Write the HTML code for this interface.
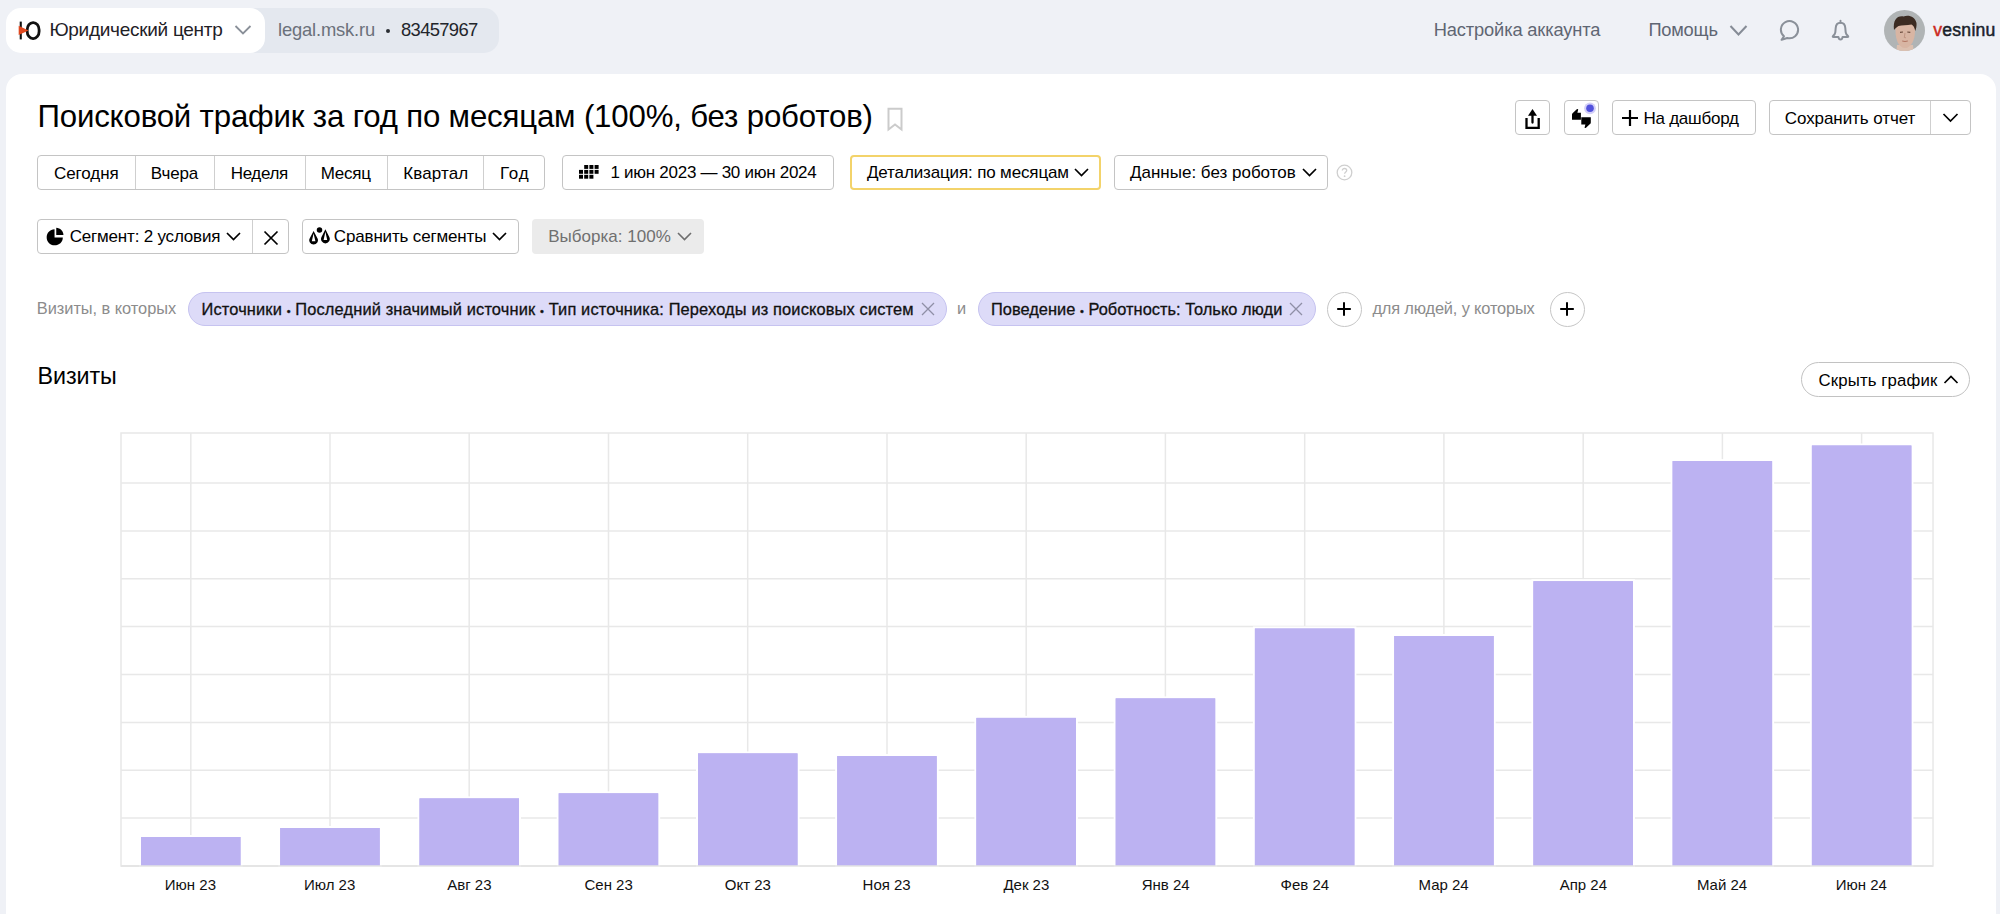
<!DOCTYPE html>
<html><head><meta charset="utf-8">
<style>
*{box-sizing:border-box;margin:0;padding:0}
html,body{width:2000px;height:914px;overflow:hidden;background:#eff1f6;font-family:"Liberation Sans",sans-serif;color:#000}
.a{position:absolute;white-space:nowrap}
.b{position:absolute;border:1px solid #c4c4c4;border-radius:4px;background:#fff}
.dv{position:absolute;width:1px;background:#cfcfcf}
</style></head><body>
<!-- header -->
<div class="a" style="left:240px;top:8px;width:259px;height:45px;background:#e4e8ef;border-radius:0 15px 15px 0"></div>
<div class="a" style="left:6px;top:8px;width:259px;height:45px;background:#fff;border-radius:15px"></div>
<svg class="a" style="left:17px;top:19px" width="26" height="24" viewBox="0 0 26 24">
 <rect x="2.7" y="2.6" width="2.1" height="17.8" fill="#111"/>
 <rect x="10.2" y="3.6" width="11.9" height="16" rx="5.8" ry="7.2" fill="none" stroke="#111" stroke-width="2.8"/>
 <path d="M1.7 6.8 L11.5 11.5 L1.7 16 Z" fill="#e0481f"/>
</svg>
<svg class="a" style="left:234px;top:24px" width="18" height="12" viewBox="0 0 18 12"><path d="M1.5 2 L9 9.5 L16.5 2" fill="none" stroke="#8a9099" stroke-width="1.8"/></svg>
<div class="a" style="left:386px;top:28.5px;width:4px;height:4px;border-radius:50%;background:#2a2d33"></div>
<svg class="a" style="left:1729px;top:24px" width="19" height="13" viewBox="0 0 19 13"><path d="M1.5 2 L9.5 10.5 L17.5 2" fill="none" stroke="#868c96" stroke-width="2"/></svg>
<svg class="a" style="left:1778px;top:19px" width="24" height="24" viewBox="0 0 24 24"><path d="M5.97 17.29 L3.6 20.8 L9.27 19.0 A8.6 8.6 0 1 0 5.97 17.29 Z" fill="none" stroke="#8a9099" stroke-width="2" stroke-linejoin="round"/></svg>
<svg class="a" style="left:1829px;top:19px" width="24" height="24" viewBox="0 0 24 24"><path d="M11.5 1.6 L11.5 3.8" stroke="#8a9099" stroke-width="1.8" stroke-linecap="round"/><path d="M11.5 3.8 C8.5 3.8 6.9 5.9 6.7 9 L6.3 13.3 C6.1 14.9 5.2 15.9 4 17 Q3.3 17.9 4.5 17.9 L9.4 17.9 C9.7 19.8 10.4 20.6 11.5 20.6 C12.6 20.6 13.3 19.8 13.6 17.9 L18.5 17.9 Q19.7 17.9 19 17 C17.8 15.9 16.9 14.9 16.7 13.3 L16.3 9 C16.1 5.9 14.5 3.8 11.5 3.8 Z" fill="none" stroke="#8a9099" stroke-width="2" stroke-linejoin="round"/></svg>
<svg class="a" style="left:1883px;top:9px" width="43" height="43" viewBox="0 0 43 43">
 <defs><clipPath id="cp"><circle cx="21.5" cy="21.5" r="20.5"/></clipPath></defs>
 <g clip-path="url(#cp)">
  <rect width="43" height="43" fill="#b0b4b5"/>
  <path d="M13 46 L14 36 L30 36 L31 46 Z" fill="#dcc0b0"/>
  <path d="M12.5 22 C12.5 14 16 11.5 22 11.5 C28.5 11.5 32 14.5 32 22 C32 31 28 39 22 39 C16 39 12.5 31 12.5 22 Z" fill="#d8b5a3"/>
  <path d="M11 21 C9.8 11 14 6.5 20.5 7.5 C26 5.5 32 8 33.5 14 C33.8 17 33 20 32.3 22 C31.5 18.5 30.5 16.5 28.5 15.5 C24 16.5 19 15.8 15.5 17 C13.6 18 12 19.8 11 21 Z" fill="#3b2b22"/>
  <path d="M17 23.3 L20 23 M24.3 23 L27.3 23.3" stroke="#6a4a3c" stroke-width="1.2"/>
  <path d="M22 24 L21.3 28.5 L23 28.8" stroke="#b98d7a" stroke-width="0.8" fill="none"/>
  <path d="M19.2 32 Q22 33 24.8 32" stroke="#b07462" stroke-width="1" fill="none"/>
 </g>
</svg>

<!-- card -->
<div class="a" style="left:6px;top:74px;width:1990px;height:900px;background:#fff;border-radius:16px"></div>

<!-- bookmark -->
<svg class="a" style="left:886px;top:107px" width="18" height="25" viewBox="0 0 18 25"><path d="M2.5 1.8 L15.5 1.8 L15.5 22.5 L9 17.5 L2.5 22.5 Z" fill="none" stroke="#cbcbcb" stroke-width="2"/></svg>

<!-- title right buttons -->
<div class="b" style="left:1515px;top:100px;width:35px;height:35px"></div>
<svg class="a" style="left:1523px;top:107px" width="20" height="24" viewBox="0 0 20 24"><path d="M9.5 15.6 L9.5 7" stroke="#000" stroke-width="2.3" stroke-linecap="round"/><path d="M5 8.7 L9.5 2 L14 8.7 Z" fill="#000"/><path d="M3.5 11.1 L3.5 20.8 L15.7 20.8 L15.7 11.1" fill="none" stroke="#000" stroke-width="2.3"/></svg>
<div class="b" style="left:1564px;top:100px;width:35px;height:35px"></div>
<svg class="a" style="left:1564px;top:100px" width="36" height="36" viewBox="0 0 36 36">
 <path d="M8 19.7 L8 14.6 Q8 13.6 8.8 12.9 L12.8 9.3 Q14 8.4 14.2 9.6 L13.4 12.7 L16.9 12.7 L16.9 19.7 Z" fill="#000"/>
 <path d="M26.8 17.3 L26.8 22.4 Q26.8 23.4 26 24.1 L22 27.7 Q20.8 28.6 20.6 27.4 L21.4 24.6 L17.3 24.6 L17.3 17.3 Z" fill="#000"/>
 <circle cx="26" cy="8.3" r="5.9" fill="#d4d0f8"/>
 <circle cx="26" cy="8.3" r="3.8" fill="#5252dc"/>
</svg>
<div class="b" style="left:1612px;top:100px;width:144px;height:35px"></div>
<svg class="a" style="left:1621px;top:109px" width="18" height="18" viewBox="0 0 18 18"><path d="M9 1 L9 17 M1 9 L17 9" stroke="#000" stroke-width="2.2"/></svg>
<div class="b" style="left:1769px;top:100px;width:202px;height:35px"></div>
<div class="dv" style="left:1930px;top:101px;height:33px"></div>
<svg class="a" style="left:1942px;top:112px" width="17" height="12" viewBox="0 0 17 12"><path d="M1.5 2 L8.5 9 L15.5 2" fill="none" stroke="#000" stroke-width="1.7"/></svg>

<!-- row 2 -->
<div class="b" style="left:37px;top:155px;width:508px;height:35px"></div>
<div class="dv" style="left:135px;top:156px;height:33px"></div>
<div class="dv" style="left:214px;top:156px;height:33px"></div>
<div class="dv" style="left:305px;top:156px;height:33px"></div>
<div class="dv" style="left:387px;top:156px;height:33px"></div>
<div class="dv" style="left:483px;top:156px;height:33px"></div>
<div class="b" style="left:562px;top:155px;width:272px;height:35px"></div>
<svg class="a" style="left:578.5px;top:165px" width="21" height="15" viewBox="0 0 21 15" fill="#000"><rect x="5.2" y="0.0" width="4" height="3.9"/><rect x="10.4" y="0.0" width="4" height="3.9"/><rect x="15.6" y="0.0" width="4" height="3.9"/><rect x="0.0" y="4.9" width="4" height="3.9"/><rect x="5.2" y="4.9" width="4" height="3.9"/><rect x="10.4" y="4.9" width="4" height="3.9"/><rect x="15.6" y="4.9" width="4" height="3.9"/><rect x="0.0" y="9.8" width="4" height="3.9"/><rect x="5.2" y="9.8" width="4" height="3.9"/><rect x="10.4" y="9.8" width="4" height="3.9"/></svg>
<div class="b" style="left:850px;top:155px;width:251px;height:35px;border:2px solid #f3d36a"></div>
<svg class="a" style="left:1074px;top:167px" width="15" height="11" viewBox="0 0 15 11"><path d="M1 2 L7.5 8.5 L14 2" fill="none" stroke="#000" stroke-width="1.7"/></svg>
<div class="b" style="left:1114px;top:155px;width:214px;height:35px"></div>
<svg class="a" style="left:1302px;top:167px" width="15" height="11" viewBox="0 0 15 11"><path d="M1 2 L7.5 8.5 L14 2" fill="none" stroke="#000" stroke-width="1.7"/></svg>
<svg class="a" style="left:1336px;top:164px" width="17" height="17" viewBox="0 0 17 17"><circle cx="8.5" cy="8.5" r="7.3" fill="none" stroke="#cfcfcf" stroke-width="1.3"/><path d="M6.3 6.6 C6.3 5.2 7.3 4.5 8.5 4.5 C9.8 4.5 10.7 5.3 10.7 6.4 C10.7 7.9 8.6 8 8.6 9.8" fill="none" stroke="#cfcfcf" stroke-width="1.3"/><circle cx="8.6" cy="12.2" r="0.9" fill="#cfcfcf"/></svg>

<!-- row 3 -->
<div class="b" style="left:37px;top:219px;width:252px;height:35px"></div>
<div class="dv" style="left:252px;top:220px;height:33px"></div>
<svg class="a" style="left:45.6px;top:227.3px" width="19" height="19" viewBox="0 0 20 20"><path d="M9 2.3 L9 11 L17.7 11 C17.7 15.8 13.8 19.3 9 19.3 C4.2 19.3 0.7 15.5 0.7 10.8 C0.7 6.1 4.2 2.5 9 2.3 Z" fill="#000"/><path d="M10.8 0.7 C15 0.9 18.2 4.2 18.4 8.4 L10.8 8.4 Z" fill="#000"/></svg>
<svg class="a" style="left:226px;top:231px" width="15" height="11" viewBox="0 0 15 11"><path d="M1 2 L7.5 8.5 L14 2" fill="none" stroke="#000" stroke-width="1.7"/></svg>
<svg class="a" style="left:263px;top:230px" width="16" height="16" viewBox="0 0 16 16"><path d="M1.5 1.5 L14.5 14.5 M14.5 1.5 L1.5 14.5" stroke="#000" stroke-width="1.7"/></svg>
<div class="b" style="left:302px;top:219px;width:217px;height:35px"></div>
<svg class="a" style="left:308px;top:226px" width="24" height="22" viewBox="0 0 24 22" fill="#000">
 <circle cx="11.5" cy="4" r="2.75"/>
 <path d="M5.6 5 L9.44 12.2 A4.35 4.35 0 1 1 1.76 12.2 Z M5.6 7.6 L7.4 15.3 L3.8 15.3 Z" fill-rule="evenodd"/>
 <path d="M17.4 3.25 L21.3 11.12 A4.35 4.35 0 1 1 13.5 11.12 Z M17.4 5.85 L19.2 14.05 L15.6 14.05 Z" fill-rule="evenodd"/>
</svg>
<svg class="a" style="left:492px;top:231px" width="15" height="11" viewBox="0 0 15 11"><path d="M1 2 L7.5 8.5 L14 2" fill="none" stroke="#000" stroke-width="1.7"/></svg>
<div class="a" style="left:532px;top:219px;width:172px;height:35px;background:#ebebeb;border-radius:4px"></div>
<svg class="a" style="left:677px;top:231px" width="15" height="11" viewBox="0 0 15 11"><path d="M1 2 L7.5 8.5 L14 2" fill="none" stroke="#6e6e6e" stroke-width="1.6"/></svg>

<!-- row 4 chips -->
<div class="a" style="left:188px;top:292px;width:759px;height:34px;background:#dddbf8;border:1px solid #c6c3f0;border-radius:17px"></div>
<svg class="a" style="left:920px;top:301px" width="16" height="16" viewBox="0 0 16 16"><path d="M2 2 L14 14 M14 2 L2 14" stroke="#8f8fa6" stroke-width="1.3"/></svg>
<div class="a" style="left:978px;top:292px;width:338px;height:34px;background:#dddbf8;border:1px solid #c6c3f0;border-radius:17px"></div>
<svg class="a" style="left:1288px;top:301px" width="16" height="16" viewBox="0 0 16 16"><path d="M2 2 L14 14 M14 2 L2 14" stroke="#8f8fa6" stroke-width="1.3"/></svg>
<div class="a" style="left:1326.5px;top:292px;width:35px;height:35px;border:1px solid #c6c6c6;border-radius:50%;background:#fff"></div>
<svg class="a" style="left:1336px;top:301px" width="16" height="16" viewBox="0 0 16 16"><path d="M8 1.2 L8 14.8 M1.2 8 L14.8 8" stroke="#000" stroke-width="2"/></svg>
<div class="a" style="left:1549.5px;top:292px;width:35px;height:35px;border:1px solid #c6c6c6;border-radius:50%;background:#fff"></div>
<svg class="a" style="left:1559px;top:301px" width="16" height="16" viewBox="0 0 16 16"><path d="M8 1.2 L8 14.8 M1.2 8 L14.8 8" stroke="#000" stroke-width="2"/></svg>

<!-- hide chart btn -->
<div class="a" style="left:1801px;top:362px;width:169px;height:35px;border:1px solid #c2c2c2;border-radius:18px;background:#fff"></div>
<svg class="a" style="left:1943px;top:374px" width="16" height="11" viewBox="0 0 16 11"><path d="M1.5 9 L8 2.5 L14.5 9" fill="none" stroke="#000" stroke-width="1.7"/></svg>

<svg class="a" style="left:0;top:0" width="2000" height="914" viewBox="0 0 2000 914">
<g stroke="#e8e8e8" stroke-width="1.5" fill="none">
<rect x="121" y="433" width="1812" height="433"/>
<line x1="121" y1="483.0" x2="1933" y2="483.0"/>
<line x1="121" y1="530.9" x2="1933" y2="530.9"/>
<line x1="121" y1="578.8" x2="1933" y2="578.8"/>
<line x1="121" y1="626.6" x2="1933" y2="626.6"/>
<line x1="121" y1="674.5" x2="1933" y2="674.5"/>
<line x1="121" y1="722.4" x2="1933" y2="722.4"/>
<line x1="121" y1="770.2" x2="1933" y2="770.2"/>
<line x1="121" y1="818.1" x2="1933" y2="818.1"/>
<line x1="121" y1="866.0" x2="1933" y2="866.0"/>
<line x1="190.8" y1="433" x2="190.8" y2="866"/>
<line x1="330.0" y1="433" x2="330.0" y2="866"/>
<line x1="469.2" y1="433" x2="469.2" y2="866"/>
<line x1="608.5" y1="433" x2="608.5" y2="866"/>
<line x1="747.7" y1="433" x2="747.7" y2="866"/>
<line x1="887.0" y1="433" x2="887.0" y2="866"/>
<line x1="1026.2" y1="433" x2="1026.2" y2="866"/>
<line x1="1165.4" y1="433" x2="1165.4" y2="866"/>
<line x1="1304.7" y1="433" x2="1304.7" y2="866"/>
<line x1="1443.9" y1="433" x2="1443.9" y2="866"/>
<line x1="1583.2" y1="433" x2="1583.2" y2="866"/>
<line x1="1722.4" y1="433" x2="1722.4" y2="866"/>
<line x1="1861.6" y1="433" x2="1861.6" y2="866"/>
</g>
<g fill="#bcb2f2" stroke="#fff" stroke-width="4" paint-order="stroke">
<rect x="141.0" y="837" width="99.5" height="29.0"/>
<rect x="280.2" y="828" width="99.5" height="38.0"/>
<rect x="419.5" y="798.4" width="99.5" height="67.6"/>
<rect x="558.7" y="793.3" width="99.5" height="72.7"/>
<rect x="698.0" y="753.4" width="99.5" height="112.6"/>
<rect x="837.2" y="756.1" width="99.5" height="109.9"/>
<rect x="976.4" y="717.9" width="99.5" height="148.1"/>
<rect x="1115.7" y="698.4" width="99.5" height="167.6"/>
<rect x="1254.9" y="628.5" width="99.5" height="237.5"/>
<rect x="1394.2" y="636" width="99.5" height="230.0"/>
<rect x="1533.4" y="581.2" width="99.5" height="284.8"/>
<rect x="1672.6" y="461.1" width="99.5" height="404.9"/>
<rect x="1811.9" y="445.5" width="99.5" height="420.5"/>
</g>
<g fill="#bcb2f2">
<rect x="141.0" y="837" width="99.5" height="29.0"/>
<rect x="280.2" y="828" width="99.5" height="38.0"/>
<rect x="419.5" y="798.4" width="99.5" height="67.6"/>
<rect x="558.7" y="793.3" width="99.5" height="72.7"/>
<rect x="698.0" y="753.4" width="99.5" height="112.6"/>
<rect x="837.2" y="756.1" width="99.5" height="109.9"/>
<rect x="976.4" y="717.9" width="99.5" height="148.1"/>
<rect x="1115.7" y="698.4" width="99.5" height="167.6"/>
<rect x="1254.9" y="628.5" width="99.5" height="237.5"/>
<rect x="1394.2" y="636" width="99.5" height="230.0"/>
<rect x="1533.4" y="581.2" width="99.5" height="284.8"/>
<rect x="1672.6" y="461.1" width="99.5" height="404.9"/>
<rect x="1811.9" y="445.5" width="99.5" height="420.5"/>
</g>
<line x1="121" y1="866" x2="1933" y2="866" stroke="#e3e3e3" stroke-width="1.6"/>
</svg>
<div class="a" style="left:49.40px;top:19.9px;font-size:19.0px;line-height:19.0px;font-weight:400;color:#1f2126;letter-spacing:-0.281px;">Юридический центр</div>
<div class="a" style="left:278.00px;top:21.0px;font-size:18.4px;line-height:18.4px;font-weight:400;color:#6b717b;letter-spacing:-0.174px;">legal.msk.ru</div>
<div class="a" style="left:401.00px;top:21.0px;font-size:18.4px;line-height:18.4px;font-weight:400;color:#22252b;letter-spacing:-0.657px;">83457967</div>
<div class="a" style="left:1433.80px;top:21.2px;font-size:18.3px;line-height:18.3px;font-weight:400;color:#5f6673;letter-spacing:-0.153px;">Настройка аккаунта</div>
<div class="a" style="left:1648.40px;top:20.9px;font-size:18.3px;line-height:18.3px;font-weight:400;color:#5f6673;letter-spacing:-0.217px;">Помощь</div>
<div class="a" style="left:1933.20px;top:21.8px;font-size:17.6px;line-height:17.6px;font-weight:400;color:#1b1f2a;letter-spacing:0.257px;-webkit-text-stroke:0.5px #1b1f2a;"><span style='color:#cc2a20;-webkit-text-stroke:0.5px #cc2a20'>v</span>esninu</div>
<div class="a" style="left:37.50px;top:100.9px;font-size:31.2px;line-height:31.2px;font-weight:400;color:#000;letter-spacing:-0.164px;">Поисковой трафик за год по месяцам (100%, без роботов)</div>
<div class="a" style="left:1643.40px;top:109.5px;font-size:17px;line-height:17px;font-weight:400;color:#000;letter-spacing:-0.236px;">На дашборд</div>
<div class="a" style="left:1784.75px;top:109.5px;font-size:17px;line-height:17px;font-weight:400;color:#000;letter-spacing:-0.069px;">Сохранить отчет</div>
<div class="a" style="left:54.00px;top:164.8px;font-size:17px;line-height:17px;font-weight:400;color:#000;letter-spacing:-0.075px;">Сегодня</div>
<div class="a" style="left:150.80px;top:164.8px;font-size:17px;line-height:17px;font-weight:400;color:#000;letter-spacing:-0.148px;">Вчера</div>
<div class="a" style="left:230.75px;top:164.8px;font-size:17px;line-height:17px;font-weight:400;color:#000;letter-spacing:-0.367px;">Неделя</div>
<div class="a" style="left:320.75px;top:164.8px;font-size:17px;line-height:17px;font-weight:400;color:#000;letter-spacing:-0.253px;">Месяц</div>
<div class="a" style="left:403.25px;top:164.8px;font-size:17px;line-height:17px;font-weight:400;color:#000;letter-spacing:0.112px;">Квартал</div>
<div class="a" style="left:500.00px;top:164.8px;font-size:17px;line-height:17px;font-weight:400;color:#000;letter-spacing:0.800px;">Год</div>
<div class="a" style="left:610.50px;top:164.2px;font-size:17px;line-height:17px;font-weight:400;color:#000;letter-spacing:-0.278px;">1 июн 2023 — 30 июн 2024</div>
<div class="a" style="left:867.00px;top:164.2px;font-size:17px;line-height:17px;font-weight:400;color:#000;letter-spacing:-0.142px;">Детализация: по месяцам</div>
<div class="a" style="left:1130.00px;top:164.2px;font-size:17px;line-height:17px;font-weight:400;color:#000;letter-spacing:-0.002px;">Данные: без роботов</div>
<div class="a" style="left:69.75px;top:228.2px;font-size:17px;line-height:17px;font-weight:400;color:#000;letter-spacing:-0.196px;">Сегмент: 2 условия</div>
<div class="a" style="left:333.80px;top:228.2px;font-size:17px;line-height:17px;font-weight:400;color:#000;letter-spacing:-0.159px;">Сравнить сегменты</div>
<div class="a" style="left:548.20px;top:228.2px;font-size:17px;line-height:17px;font-weight:400;color:#707070;letter-spacing:0.018px;">Выборка: 100%</div>
<div class="a" style="left:36.80px;top:299.8px;font-size:16.4px;line-height:16.4px;font-weight:400;color:#8c8c8c;letter-spacing:-0.041px;">Визиты, в которых</div>
<div class="a" style="left:201.50px;top:300.5px;font-size:16.4px;line-height:16.4px;font-weight:400;color:#111;letter-spacing:0.145px;-webkit-text-stroke:0.3px #111;">Источники <span style='font-size:11px'>•</span> Последний значимый источник <span style='font-size:11px'>•</span> Тип источника: Переходы из поисковых систем</div>
<div class="a" style="left:957.00px;top:300.0px;font-size:16.4px;line-height:16.4px;font-weight:400;color:#8c8c8c;letter-spacing:0.000px;">и</div>
<div class="a" style="left:991.00px;top:300.5px;font-size:16.4px;line-height:16.4px;font-weight:400;color:#111;letter-spacing:0.024px;-webkit-text-stroke:0.3px #111;">Поведение <span style='font-size:11px'>•</span> Роботность: Только люди</div>
<div class="a" style="left:1372.40px;top:299.8px;font-size:16.4px;line-height:16.4px;font-weight:400;color:#8c8c8c;letter-spacing:-0.157px;">для людей, у которых</div>
<div class="a" style="left:37.60px;top:364.9px;font-size:23.3px;line-height:23.3px;font-weight:400;color:#000;letter-spacing:-0.083px;">Визиты</div>
<div class="a" style="left:1818.50px;top:372.7px;font-size:16.8px;line-height:16.8px;font-weight:400;color:#000;letter-spacing:0.132px;">Скрыть график</div>
<div class="a" style="left:164.84px;top:877.3px;font-size:15px;line-height:15px;color:#111">Июн 23</div>
<div class="a" style="left:304.01px;top:877.3px;font-size:15px;line-height:15px;color:#111">Июл 23</div>
<div class="a" style="left:447.25px;top:877.3px;font-size:15px;line-height:15px;color:#111">Авг 23</div>
<div class="a" style="left:584.49px;top:877.3px;font-size:15px;line-height:15px;color:#111">Сен 23</div>
<div class="a" style="left:724.82px;top:877.3px;font-size:15px;line-height:15px;color:#111">Окт 23</div>
<div class="a" style="left:862.55px;top:877.3px;font-size:15px;line-height:15px;color:#111">Ноя 23</div>
<div class="a" style="left:1003.40px;top:877.3px;font-size:15px;line-height:15px;color:#111">Дек 23</div>
<div class="a" style="left:1141.63px;top:877.3px;font-size:15px;line-height:15px;color:#111">Янв 24</div>
<div class="a" style="left:1280.56px;top:877.3px;font-size:15px;line-height:15px;color:#111">Фев 24</div>
<div class="a" style="left:1418.48px;top:877.3px;font-size:15px;line-height:15px;color:#111">Мар 24</div>
<div class="a" style="left:1559.66px;top:877.3px;font-size:15px;line-height:15px;color:#111">Апр 24</div>
<div class="a" style="left:1696.94px;top:877.3px;font-size:15px;line-height:15px;color:#111">Май 24</div>
<div class="a" style="left:1835.72px;top:877.3px;font-size:15px;line-height:15px;color:#111">Июн 24</div>
</body></html>
